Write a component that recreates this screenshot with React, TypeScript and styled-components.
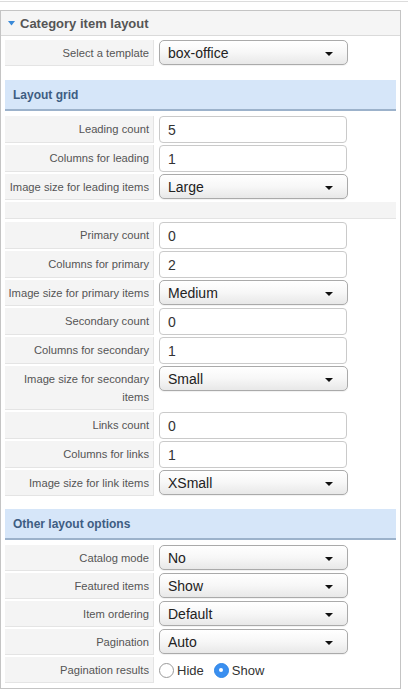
import React from 'react';
import styled, { createGlobalStyle } from 'styled-components';

const GlobalStyle = createGlobalStyle`
    html, body {
        margin: 0;
        padding: 0;
        background: #fff;
        font-family: "Liberation Sans", Arial, sans-serif;
    }
`;

const Page = styled.div`
    width: 408px;
    padding-top: 1px;
`;
const TopRule = styled.div`
    border-top: 1px solid #dcdcdc;
    margin-bottom: 8px;
`;
const Panel = styled.div`
    width: 399px;
    border: 1px solid #c4c4c4;
    padding-bottom: 5px;
`;
const PanelHeader = styled.div`
    height: 24px;
    display: flex;
    align-items: center;
    gap: 5px;
    padding-left: 7px;
    background: #f5f5f5;
    border-bottom: 1px solid #dadada;
    font-size: 13px;
    font-weight: bold;
    color: #555;
`;
const PanelBody = styled.div`
    padding: 4px 4px 0 4px;
    display: flex;
    flex-direction: column;
`;
const Section = styled.div<{ $gap: number }>`
    display: flex;
    flex-direction: column;
    gap: ${(p) => p.$gap}px;
`;
const SectionTitle = styled.div<{ $top: number }>`
    margin-top: ${(p) => p.$top}px;
    margin-bottom: 5px;
    height: 29px;
    padding-left: 8px;
    display: flex;
    align-items: center;
    background: #d6e6f9;
    border-bottom: 2px solid #9cb2cb;
    font-size: 12px;
    font-weight: bold;
    color: #3e5d82;
`;
const Row = styled.div`
    display: flex;
    align-items: flex-start;
`;
const Label = styled.div`
    width: 143px;
    flex-shrink: 0;
    align-self: stretch;
    padding: 4px 4px 3px 1px;
    background: #f4f4f4;
    border-right: 1px solid #e4e4e4;
    border-bottom: 1px solid #e4e4e4;
    text-align: right;
    font-size: 11.2px;
    line-height: 18px;
    color: #555;
`;
const Control = styled.div`
    padding-left: 5px;
    display: flex;
    align-items: center;
`;
const TextInput = styled.input`
    box-sizing: border-box;
    width: 188px;
    height: 27px;
    padding: 0 8px;
    border: 1px solid #cacaca;
    border-radius: 4px;
    font-family: "Liberation Sans", Arial, sans-serif;
    font-size: 14px;
    color: #333;
    background: #fff;
    outline: none;
`;
const SelectBox = styled.div`
    box-sizing: border-box;
    width: 189px;
    height: 25px;
    padding: 0 14px 0 8px;
    display: flex;
    align-items: center;
    justify-content: space-between;
    border: 1px solid #aaa;
    border-radius: 5px;
    background: linear-gradient(#ffffff 0%, #f7f7f7 50%, #e8e8e8 100%);
    box-shadow: 0 1px 1px rgba(0, 0, 0, 0.06);
    font-size: 14px;
    color: #222;
`;
const Caret = styled.span`
    width: 0;
    height: 0;
    margin-top: 3px;
    border-left: 4px solid transparent;
    border-right: 4px solid transparent;
    border-top: 4px solid #111;
`;
const Spacer = styled.div`
    height: 16px;
    margin-bottom: 1px;
    background: #f4f4f4;
    border-bottom: 1px solid #e4e4e4;
`;
const RadioGroup = styled.div`
    display: flex;
    align-items: center;
    gap: 10px;
    height: 26px;
    font-size: 13px;
    color: #333;
`;
const RadioOption = styled.label`
    display: flex;
    align-items: center;
    gap: 3px;
`;
const RadioDot = styled.span<{ $on?: boolean }>`
    box-sizing: border-box;
    width: 15px;
    height: 15px;
    border-radius: 50%;
    border: 1px solid ${(p) => (p.$on ? '#2f86e6' : '#9a9a9a')};
    background: ${(p) => (p.$on ? '#3a8ff0' : '#fff')};
    display: flex;
    align-items: center;
    justify-content: center;
    &::after {
        content: '';
        width: 4px;
        height: 4px;
        border-radius: 50%;
        background: ${(p) => (p.$on ? '#fff' : 'transparent')};
    }
`;

type Field = { label: string; kind: 'input' | 'select'; value: string } | { kind: 'spacer' };

const Select = ({ value }: { value: string }) => (
    <SelectBox>
        <span>{value}</span>
        <Caret />
    </SelectBox>
);

const FieldRow = ({ field }: { field: Field }) => {
    if (field.kind === 'spacer') return <Spacer />;
    return (
        <Row>
            <Label>{field.label}</Label>
            <Control>
                {field.kind === 'input' ? <TextInput defaultValue={field.value} /> : <Select value={field.value} />}
            </Control>
        </Row>
    );
};

const gridFields: Field[] = [
    { label: 'Leading count', kind: 'input', value: '5' },
    { label: 'Columns for leading', kind: 'input', value: '1' },
    { label: 'Image size for leading items', kind: 'select', value: 'Large' },
    { kind: 'spacer' },
    { label: 'Primary count', kind: 'input', value: '0' },
    { label: 'Columns for primary', kind: 'input', value: '2' },
    { label: 'Image size for primary items', kind: 'select', value: 'Medium' },
    { label: 'Secondary count', kind: 'input', value: '0' },
    { label: 'Columns for secondary', kind: 'input', value: '1' },
    { label: 'Image size for secondary items', kind: 'select', value: 'Small' },
    { label: 'Links count', kind: 'input', value: '0' },
    { label: 'Columns for links', kind: 'input', value: '1' },
    { label: 'Image size for link items', kind: 'select', value: 'XSmall' },
];

const otherFields: Field[] = [
    { label: 'Catalog mode', kind: 'select', value: 'No' },
    { label: 'Featured items', kind: 'select', value: 'Show' },
    { label: 'Item ordering', kind: 'select', value: 'Default' },
    { label: 'Pagination', kind: 'select', value: 'Auto' },
];

const App = () => {
    return (
        <Page>
            <GlobalStyle />
            <TopRule />
            <Panel>
                <PanelHeader>
                    <svg width="7" height="5" viewBox="0 0 7 5">
                        <polygon points="0,0 7,0 3.5,4.5" fill="#3a8ad8" />
                    </svg>
                    Category item layout
                </PanelHeader>
                <PanelBody>
                    <FieldRow field={{ label: 'Select a template', kind: 'select', value: 'box-office' }} />

                    <SectionTitle $top={14}>Layout grid</SectionTitle>
                    <Section $gap={2}>
                        {gridFields.map((f, i) => (
                            <FieldRow key={i} field={f} />
                        ))}
                    </Section>

                    <SectionTitle $top={13}>Other layout options</SectionTitle>
                    <Section $gap={2}>
                        {otherFields.map((f, i) => (
                            <FieldRow key={i} field={f} />
                        ))}
                        <Row>
                            <Label>Pagination results</Label>
                            <Control>
                                <RadioGroup>
                                    <RadioOption>
                                        <RadioDot />
                                        Hide
                                    </RadioOption>
                                    <RadioOption>
                                        <RadioDot $on />
                                        Show
                                    </RadioOption>
                                </RadioGroup>
                            </Control>
                        </Row>
                    </Section>
                </PanelBody>
            </Panel>
        </Page>
    );
};

export default App;
